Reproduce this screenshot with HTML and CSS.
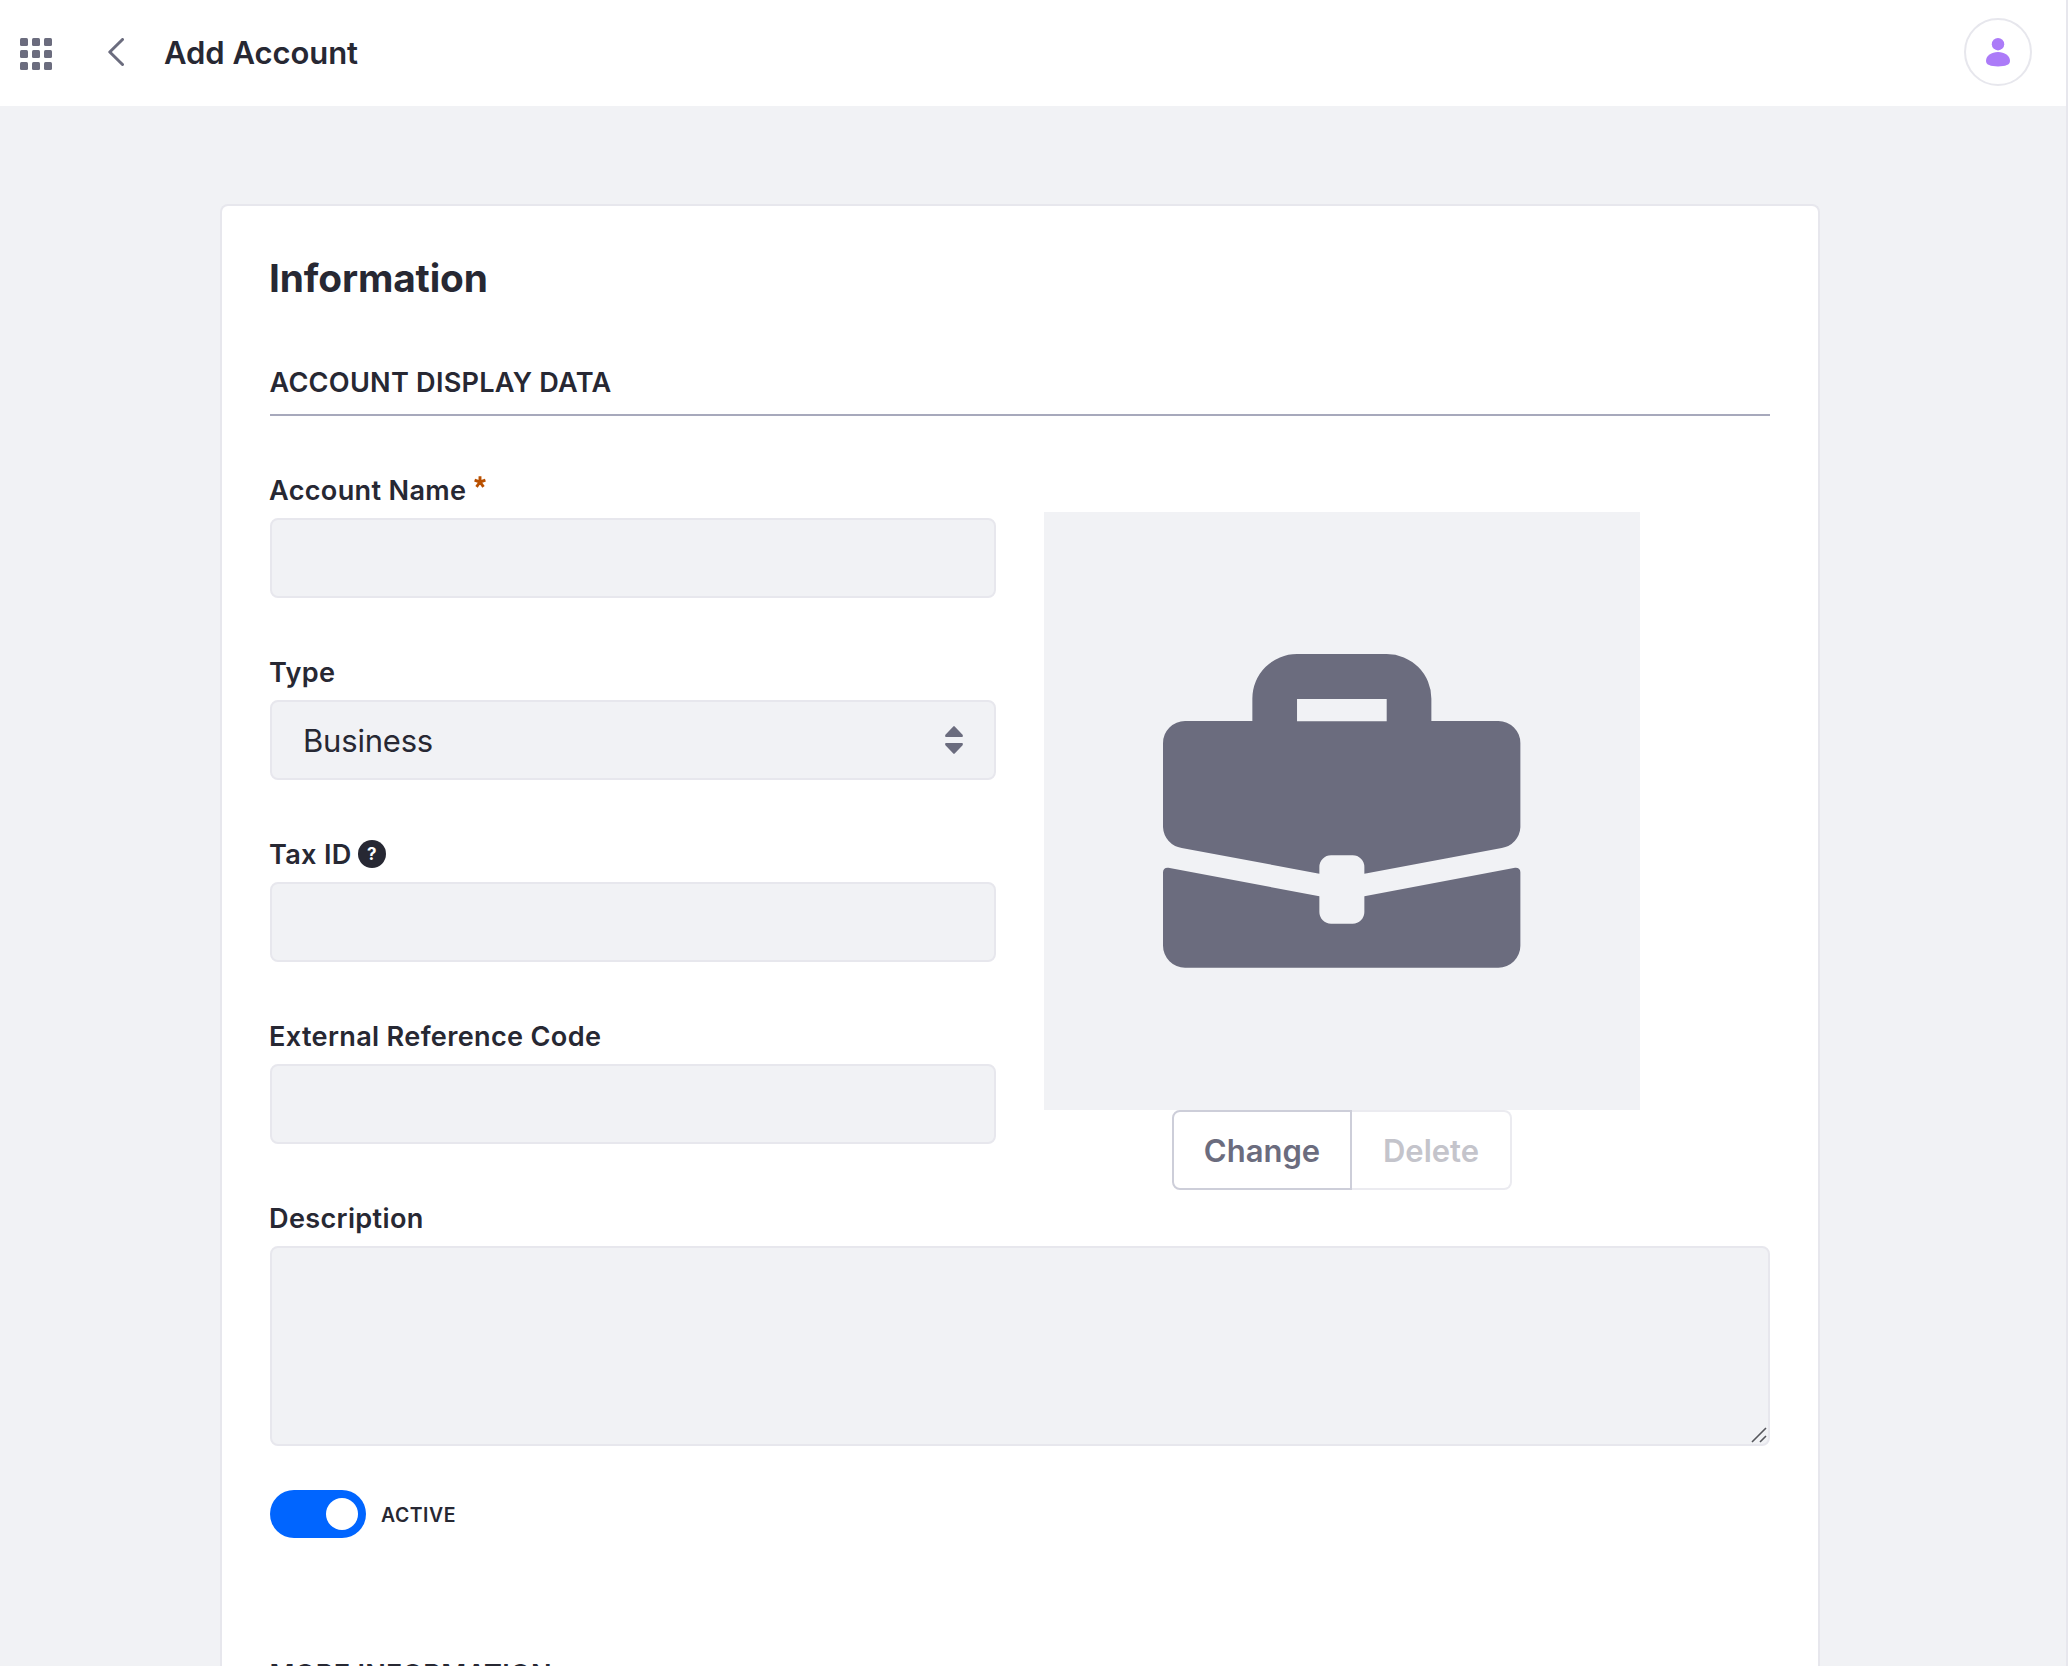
FILE: index.html
```html
<!DOCTYPE html>
<html lang="en">
<head>
<meta charset="utf-8">
<title>Add Account</title>
<link rel="stylesheet" href="styles.css">
</head>
<body>
<header class="topbar">
  <button class="icon-button apps" aria-label="Applications">
    <svg width="32" height="32" viewBox="0 0 32 32" fill="currentColor">
      <rect width="8" height="8" rx="1.5"/><rect x="12" width="8" height="8" rx="1.5"/><rect x="24" width="8" height="8" rx="1.5"/>
      <rect y="12" width="8" height="8" rx="1.5"/><rect x="12" y="12" width="8" height="8" rx="1.5"/><rect x="24" y="12" width="8" height="8" rx="1.5"/>
      <rect y="24" width="8" height="8" rx="1.5"/><rect x="12" y="24" width="8" height="8" rx="1.5"/><rect x="24" y="24" width="8" height="8" rx="1.5"/>
    </svg>
  </button>
  <button class="icon-button back" aria-label="Back">
    <svg width="16" height="28" viewBox="0 0 16 28" fill="none" stroke="currentColor" stroke-width="3" stroke-linecap="round" stroke-linejoin="round"><path d="M14.5 1.500 1.800 14l12.700 12.500"/></svg>
  </button>
  <h1 class="topbar-title">Add Account</h1>
  <div class="avatar">
    <svg width="24" height="29" viewBox="0 0 24 29" fill="currentColor"><circle cx="12" cy="6.2" r="6.2"/><path d="M12 14C5.500 14 0 17.500 0 23c0 3.800 4.500 5.400 12 5.400s12-1.600 12-5.400c0-5.500-5.500-9-12-9z"/></svg>
  </div>
</header>
<main class="card">
  <h2 class="card-title">Information</h2>
  <h3 class="section-title">ACCOUNT DISPLAY DATA</h3>
  <div class="columns">
    <div class="fields">
      <div class="field">
        <label class="label" for="name">Account Name
          <svg class="required" width="12" height="12" viewBox="0 0 12 12" stroke="currentColor" stroke-width="2.9"><path d="M6 6V.2M6 6 .6 4.200M6 6l5.400-1.800M6 6l-3.500 4.800M6 6l3.500 4.800"/></svg>
        </label>
        <input class="control" id="name" type="text">
      </div>
      <div class="field">
        <label class="label" for="type">Type</label>
        <button class="control select" id="type"><span>Business</span>
          <svg width="18" height="28" viewBox="0 0 18 28" fill="currentColor"><path d="M8.300.4q.7-.7 1.400 0L17.600 8.800Q18.400 11 17 11H1Q-.4 11 .4 8.800zM8.300 27.600q.7.7 1.400 0L17.600 19.200Q18.400 17 17 17H1Q-.4 17 .4 19.200z"/></svg>
        </button>
      </div>
      <div class="field">
        <label class="label" for="tax">Tax ID <span class="help">?</span></label>
        <input class="control" id="tax" type="text">
      </div>
      <div class="field">
        <label class="label" for="code">External Reference Code</label>
        <input class="control" id="code" type="text">
      </div>
    </div>
    <div class="logo">
      <div class="logo-preview">
        <svg width="357.400" height="313.700" viewBox="70 72 1072 941" fill="currentColor">
          <path fill-rule="evenodd" d="M136 273H338V206A134 134 0 0 1 472 72H741A134 134 0 0 1 875 206V273H1076A66 66 0 0 1 1142 339V592A66 66 0 0 1 1086 654L674 731V711A35 35 0 0 0 639 676H574A35 35 0 0 0 539 711V731L126 654A66 66 0 0 1 70 592V339A66 66 0 0 1 136 273ZM472 207V274H741V207Z"/>
          <path d="M70 727Q70 712 86 713L539 799V846A35 35 0 0 0 574 881H639A35 35 0 0 0 674 846V799L1126 713Q1142 712 1142 727V947A66 66 0 0 1 1076 1013H136A66 66 0 0 1 70 947Z"/>
        </svg>
      </div>
      <div class="button-group">
        <button class="btn change">Change</button>
        <button class="btn delete" disabled>Delete</button>
      </div>
    </div>
  </div>
  <div class="field description">
    <label class="label" for="description">Description</label>
    <div class="textarea-wrap">
      <textarea class="control textarea" id="description"></textarea>
      <svg class="grip" width="16" height="16" viewBox="0 0 16 16" stroke="#55565c" stroke-width="1.600"><path d="M1 15 15 1M9 15l6-6"/></svg>
    </div>
  </div>
  <div class="toggle-row">
    <span class="toggle"><span class="knob"></span></span>
    <span class="toggle-label">ACTIVE</span>
  </div>
  <h3 class="section-title more">MORE INFORMATION</h3>
</main>
</body>
</html>
```
FILE: styles.css
```css
* { box-sizing: border-box; }

body {
  margin: 0;
  height: 1666px;
  overflow: hidden;
  background: #f1f2f5;
  border-right: 2px solid #e7e7ed;
  color: #272833;
  font-family: Inter, "Liberation Sans", sans-serif;
}

h1, h2, h3 { margin: 0; }
button, input, textarea { font: inherit; color: inherit; }
svg { display: block; flex: none; }

.topbar {
  display: flex;
  align-items: center;
  height: 106px;
  padding: 0 34px 2px 20px;
  background: #fff;
}
.icon-button { padding: 0; border: 0; background: none; color: #6b6c7e; }
.apps { margin: 4px 56px 0 0; }
.back { margin-right: 40px; }
.topbar-title { padding-top: 2px; font-size: 31px; font-weight: 600; line-height: 40px; letter-spacing: -0.05px; }
.avatar {
  display: flex;
  align-items: center;
  justify-content: center;
  width: 68px;
  height: 68px;
  margin-left: auto;
  border: 2px solid #e7e7ed;
  border-radius: 50%;
  color: #ac7bf8;
}

.card {
  width: 1600px;
  height: 1462px;
  margin: 98px 0 0 220px;
  padding: 48px 48px 0;
  overflow: hidden;
  background: #fff;
  border: 2px solid #e7e7ed;
  border-bottom: 0;
  border-radius: 8px 8px 0 0;
}
.card-title { height: 48px; font-size: 38.8px; font-weight: 700; line-height: 48px; letter-spacing: -0.12px; text-indent: -1px; }
.section-title {
  margin: 60px 0 58px;
  padding: 1px 0 11px;
  border-bottom: 2px solid #a7a9bc;
  font-size: 27.1px;
  font-weight: 560;
  line-height: 40px;
  letter-spacing: 0.25px;
  text-indent: -0.5px;
}

.columns { display: grid; grid-template-columns: 726px 596px; column-gap: 48px; align-items: start; }
.fields { display: grid; row-gap: 58px; }
.field { display: grid; row-gap: 12px; }
.label {
  display: flex;
  height: 32px;
  padding-top: 1px;
  margin-left: -1px;
  font-size: 27.1px;
  font-weight: 600;
  line-height: 32px;
  letter-spacing: 0.33px;
  white-space: nowrap;
}
.required { margin: 1px 0 0 8px; color: #b95000; }
.help {
  width: 28px;
  height: 28px;
  margin: 1px 0 0 6px;
  border-radius: 50%;
  background: #272833;
  color: #fff;
  font-size: 17px;
  font-weight: 700;
  line-height: 28px;
  letter-spacing: 0;
  text-align: center;
}
.control {
  display: block;
  width: 100%;
  height: 80px;
  margin: 0;
  padding: 0 32px;
  border: 2px solid #e7e7ed;
  border-radius: 8px;
  background: #f1f2f5;
}
.select { display: flex; align-items: center; justify-content: space-between; padding: 0 31px; font-size: 31px; letter-spacing: -0.2px; }
.select svg { color: #6b6c7e; }

.logo { display: grid; justify-items: center; margin-top: 38px; }
.logo-preview { display: flex; align-items: center; justify-content: center; width: 596px; height: 598px; background: #f1f2f5; color: #6b6c7e; }
.button-group { display: flex; width: 340px; }
.btn { height: 80px; padding: 0; border: 2px solid #cdced9; background: #fff; font-size: 31px; font-weight: 600; }
.change { width: 180px; border-radius: 8px 0 0 8px; color: #6b6c7e; }
.delete { width: 160px; border-color: #ebebf0; border-left: 0; border-radius: 0 8px 8px 0; color: #c4c4cb; }

.description { margin-top: 12px; }
.textarea-wrap { position: relative; }
.textarea { height: 200px; resize: none; }
.grip { position: absolute; right: 3px; bottom: 3px; }

.toggle-row { display: flex; align-items: center; height: 48px; margin-top: 44px; }
.toggle { display: flex; align-items: center; justify-content: flex-end; width: 96px; height: 48px; padding: 8px; border-radius: 24px; background: #0065ff; }
.knob { width: 32px; height: 32px; border-radius: 50%; background: #fff; }
.toggle-label { margin: 2px 0 0 15px; font-size: 19.4px; font-weight: 560; line-height: 24px; letter-spacing: 0.55px; }
.more { margin-top: 116px; }
```
